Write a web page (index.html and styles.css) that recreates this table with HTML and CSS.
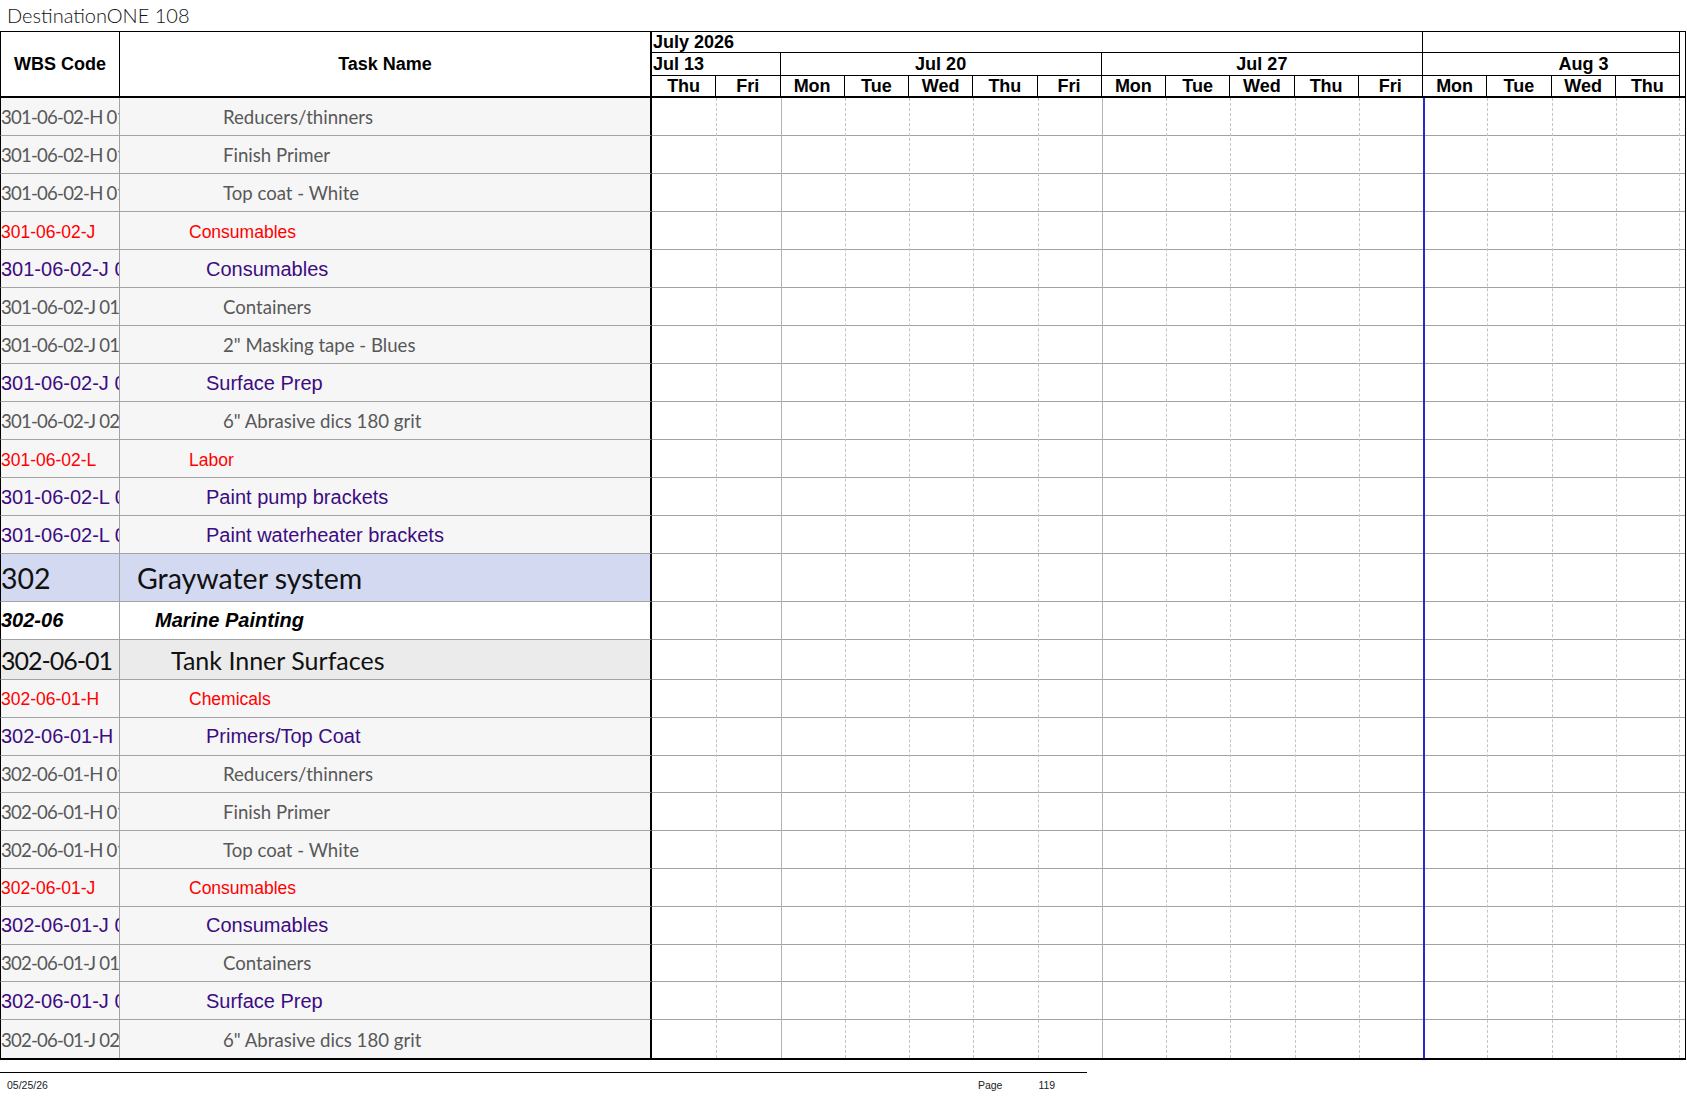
FILE: index.html
```html
<!DOCTYPE html>
<html>
<head>
<meta charset="utf-8">
<link rel="stylesheet" href="styles.css">
</head>
<body>
<div class="title">DestinationONE 108</div>
<div class="sheet">
  <div class="head">
    <div class="h-wbs">WBS Code</div>
    <div class="h-task">Task Name</div>
    <div class="month m-jul">July 2026</div>
    <div class="month m-aug"></div>
    <div class="week w-13">Jul 13</div>
    <div class="week w-20">Jul 20</div>
    <div class="week w-27">Jul 27</div>
    <div class="week w-aug"><span>Aug 3</span></div>
    <div class="day">Thu</div><div class="day">Fri</div>
    <div class="day">Mon</div><div class="day">Tue</div><div class="day">Wed</div><div class="day">Thu</div><div class="day">Fri</div>
    <div class="day">Mon</div><div class="day">Tue</div><div class="day">Wed</div><div class="day">Thu</div><div class="day">Fri</div>
    <div class="day">Mon</div><div class="day">Tue</div><div class="day">Wed</div><div class="day">Thu</div>
    <div class="day-rest"></div>
  </div>
  <div class="body">
    <div class="rows">
      <div class="wbs g">301-06-02-H 01 01</div><div class="task g">Reducers/thinners</div><div class="tl"></div>
      <div class="wbs g">301-06-02-H 01 02</div><div class="task g">Finish Primer</div><div class="tl"></div>
      <div class="wbs g">301-06-02-H 01 03</div><div class="task g">Top coat - White</div><div class="tl"></div>
      <div class="wbs r">301-06-02-J</div><div class="task r">Consumables</div><div class="tl"></div>
      <div class="wbs p">301-06-02-J 01</div><div class="task p">Consumables</div><div class="tl"></div>
      <div class="wbs g">301-06-02-J 01 01</div><div class="task g">Containers</div><div class="tl"></div>
      <div class="wbs g">301-06-02-J 01 02</div><div class="task g">2" Masking tape - Blues</div><div class="tl"></div>
      <div class="wbs p">301-06-02-J 02</div><div class="task p">Surface Prep</div><div class="tl"></div>
      <div class="wbs g">301-06-02-J 02 01</div><div class="task g">6" Abrasive dics 180 grit</div><div class="tl"></div>
      <div class="wbs r">301-06-02-L</div><div class="task r">Labor</div><div class="tl"></div>
      <div class="wbs p">301-06-02-L 01</div><div class="task p">Paint pump brackets</div><div class="tl"></div>
      <div class="wbs p">301-06-02-L 02</div><div class="task p">Paint waterheater brackets</div><div class="tl"></div>
      <div class="wbs l1">302</div><div class="task l1">Graywater system</div><div class="tl l1"></div>
      <div class="wbs l2">302-06</div><div class="task l2">Marine Painting</div><div class="tl l2"></div>
      <div class="wbs l3">302-06-01</div><div class="task l3">Tank Inner Surfaces</div><div class="tl l3"></div>
      <div class="wbs r b">302-06-01-H</div><div class="task r b">Chemicals</div><div class="tl b"></div>
      <div class="wbs p b">302-06-01-H 01</div><div class="task p b">Primers/Top Coat</div><div class="tl b"></div>
      <div class="wbs g b">302-06-01-H 01 01</div><div class="task g b">Reducers/thinners</div><div class="tl b"></div>
      <div class="wbs g b">302-06-01-H 01 02</div><div class="task g b">Finish Primer</div><div class="tl b"></div>
      <div class="wbs g b">302-06-01-H 01 03</div><div class="task g b">Top coat - White</div><div class="tl b"></div>
      <div class="wbs r b">302-06-01-J</div><div class="task r b">Consumables</div><div class="tl b"></div>
      <div class="wbs p b">302-06-01-J 01</div><div class="task p b">Consumables</div><div class="tl b"></div>
      <div class="wbs g b">302-06-01-J 01 01</div><div class="task g b">Containers</div><div class="tl b"></div>
      <div class="wbs p b">302-06-01-J 02</div><div class="task p b">Surface Prep</div><div class="tl b"></div>
      <div class="wbs g b last">302-06-01-J 02 01</div><div class="task g b last">6" Abrasive dics 180 grit</div><div class="tl b last"></div>
    </div>
    <div class="days">
      <i class="first"></i><i></i>
      <i class="mon"></i><i></i><i></i><i></i><i></i>
      <i class="mon"></i><i></i><i></i><i></i><i></i>
      <i class="mon now"></i><i></i><i></i><i class="end"></i>
    </div>
  </div>
</div>
<div class="footer">
  <span class="f-date">05/25/26</span>
  <span class="f-page">Page</span>
  <span class="f-num">119</span>
</div>
</body>
</html>
```

FILE: styles.css
```css
* { box-sizing: border-box; }
html, body { margin: 0; padding: 0; background: #fff; }
body { width: 1687px; height: 1097px; overflow: hidden; font-family: "Liberation Sans", Arial, sans-serif; color: #000; }

.title {
  height: 31px;
  padding-left: 7px;
  font-family: Lato, "Open Sans", sans-serif;
  font-weight: 300;
  font-size: 20px;
  line-height: 30px;
  color: #111;
}

.sheet {
  width: 1686px;
  border-top: 1px solid #000;
  border-bottom: 2px solid #000;
  border-right: 1px solid #000;
}

.head {
  display: grid;
  grid-template-columns: 120px 532px repeat(16, 64.25px) 1fr;
  grid-template-rows: 21px 23px 22px;
  font-weight: bold;
  font-size: 18px;
}
.h-wbs, .h-task {
  grid-row: 1 / 4;
  display: flex;
  align-items: center;
  justify-content: center;
  border-bottom: 2px solid #000;
}
.h-wbs { grid-column: 1; border-left: 1px solid #000; border-right: 1px solid #000; }
.h-task { grid-column: 2; border-right: 2px solid #000; }
.month, .week {
  border-bottom: 1px solid #000;
  border-right: 1px solid #000;
  display: flex;
  align-items: center;
  white-space: nowrap;
  overflow: hidden;
  line-height: 1;
}
.month { grid-row: 1; padding-left: 1px; }
.m-jul { grid-column: 3 / 15; }
.m-aug { grid-column: 15 / 19; }
.week { grid-row: 2; justify-content: center; }
.w-13 { grid-column: 3 / 5; justify-content: flex-start; padding-left: 1px; }
.w-20 { grid-column: 5 / 10; }
.w-27 { grid-column: 10 / 15; }
.w-aug { grid-column: 15 / 19; justify-content: flex-start; }
.w-aug span { flex: none; width: 321px; text-align: center; }
.day {
  grid-row: 3;
  border-right: 1px solid #000;
  border-bottom: 2px solid #000;
  display: flex;
  align-items: center;
  justify-content: center;
  line-height: 1;
}
.day-rest { grid-row: 1 / 4; grid-column: 19; border-bottom: 2px solid #000; }

.body { display: grid; }
.rows, .days { grid-area: 1 / 1; }
.rows {
  display: grid;
  grid-template-columns: 120px 532px 1fr;
}
.wbs, .task, .tl {
  height: 38px;
  padding-top: 1px;
  border-bottom: 1px solid #a3a3a3;
  display: flex;
  align-items: center;
  white-space: nowrap;
  overflow: hidden;
  background: #f6f6f6;
}
.b { height: 37.8px; }
.last { border-bottom: none; }
.wbs { border-left: 1px solid #000; border-right: 1px solid #a3a3a3; }
.task { border-right: 2px solid #000; }
.tl { background: #fff; }

.g { font-family: Lato, "Open Sans", sans-serif; font-size: 18.6px; color: #585858; }
.wbs.g { letter-spacing: -0.8px; }
.task.g { padding-left: 103px; }
.r { font-size: 17.5px; color: #f00; padding-top: 3px; }
.task.r { padding-left: 69px; }
.p { font-size: 20px; color: #3c0c82; }
.task.p { padding-left: 86px; }

.l1 { height: 48px; padding-top: 0; background: #d3d9f0; font-family: Lato, "Open Sans", sans-serif; font-size: 28.5px; color: #111; }
.task.l1 { padding-left: 17px; }
.l2 { padding-top: 0; background: #fff; font-size: 20px; font-weight: bold; font-style: italic; }
.task.l2 { padding-left: 35px; }
.l3 { height: 40px; padding-top: 0; background: #ebebeb; font-family: Lato, "Open Sans", sans-serif; font-size: 25px; color: #111; }
.wbs.l3 { letter-spacing: -1px; }
.task.l3 { padding-left: 51px; }
.tl.l1, .tl.l2, .tl.l3 { background: #fff; }

.days {
  display: grid;
  grid-template-columns: 652px repeat(16, 64.25px);
  pointer-events: none;
}
.days i { border-left: 1px dashed #c4c4c4; }
.days i.first { grid-column: 2; border-left: none; }
.days i.mon { border-left: 1px solid #b4b4b4; }
.days i.now { border-left: 2px solid #2b2bc4; }
.days i.end { border-right: 1px dashed #c4c4c4; }

.footer {
  width: 1087px;
  margin-top: 12px;
  border-top: 1px solid #000;
  height: 26px;
  font-size: 10.5px;
  color: #222;
  display: flex;
  align-items: center;
}
.f-date { margin-left: 7px; }
.f-page { margin-left: 930px; }
.f-num { margin-left: 36px; }
```
